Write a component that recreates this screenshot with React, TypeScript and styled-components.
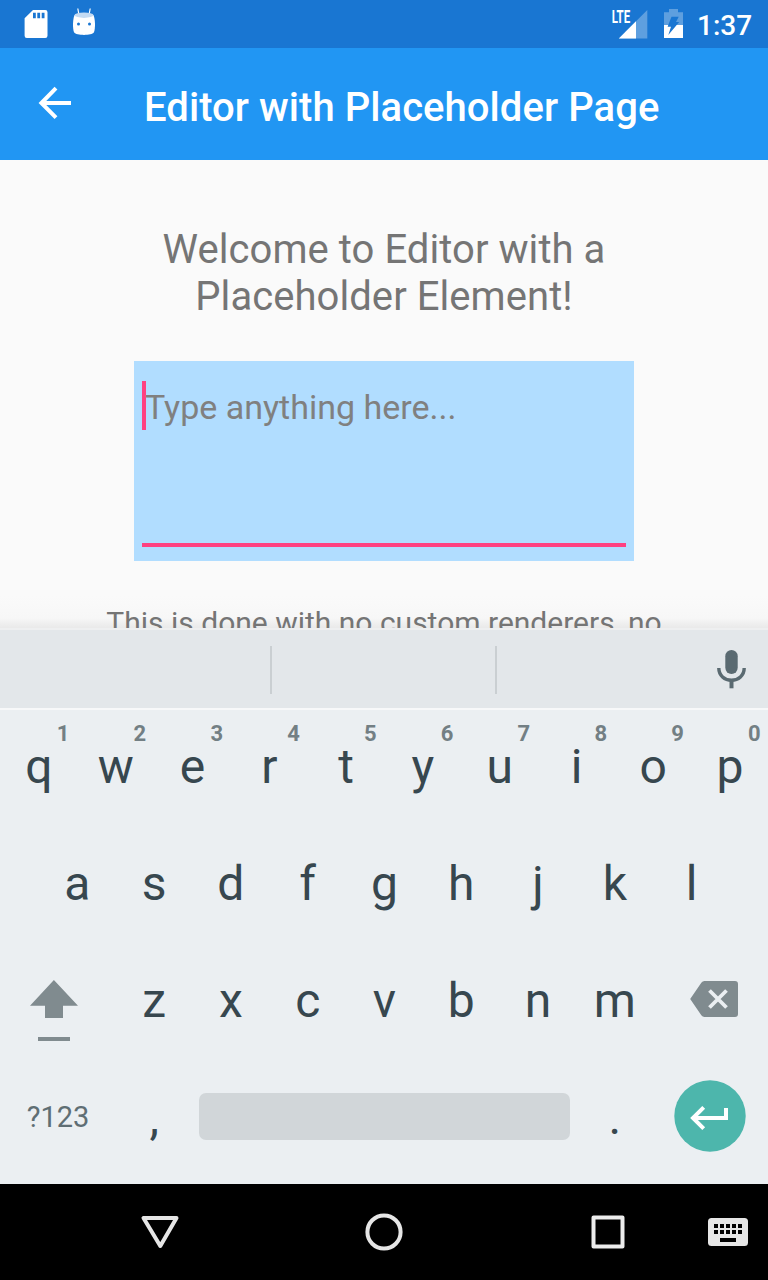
import React from 'react';
import styled, { createGlobalStyle } from 'styled-components';

const GlobalStyle = createGlobalStyle`
  * { box-sizing: border-box; }
  body { margin: 0; font-family: Roboto, sans-serif; }
  svg { display: block; flex: none; }
`;

const Screen = styled.div`
  width: 768px;
  height: 1280px;
  display: flex;
  flex-direction: column;
  overflow: hidden;
  background: #fafafa;
`;

const StatusBar = styled.header`
  flex: none;
  height: 48px;
  display: flex;
  align-items: center;
  padding: 0 16px 0 24px;
  background: #1976d2;
  color: #fff;
`;

const Notifications = styled.div`
  display: flex;
  gap: 24px;
  margin-right: auto;
`;

const Indicators = styled.div`
  display: flex;
  gap: 12px;
  margin-right: 10px;
`;

const Clock = styled.time`
  font-size: 28px;
  line-height: 32px;
  font-weight: 500;
  width: 55px;
  padding-top: 3px;
  white-space: nowrap;
`;

const AppBar = styled.div`
  flex: none;
  height: 112px;
  display: flex;
  align-items: center;
  padding: 0 36px;
  background: #2196f3;
`;

const BackButton = styled.button`
  width: 40px;
  height: 40px;
  padding: 0;
  border: 0;
  background: none;
  margin-top: -2px;
`;

const PageTitle = styled.h1`
  margin: 7px 0 0 68px;
  color: #fff;
  font-size: 40px;
  line-height: 48px;
  font-weight: 500;
  letter-spacing: 0.06px;
  white-space: nowrap;
`;

const Content = styled.main`
  flex: none;
  height: 468px;
  overflow: hidden;
  display: flex;
  flex-direction: column;
  align-items: center;
  padding-top: 66px;
  color: #757575;
  text-align: center;
  background: linear-gradient(to bottom, #fafafa 436px, #f7f7f7 458px, #e9e9e9 468px);
`;

const Welcome = styled.p`
  margin: 0;
  width: 500px;
  font-size: 40px;
  line-height: 47px;
  letter-spacing: 0.06px;
`;

const Editor = styled.div`
  flex: none;
  width: 500px;
  height: 200px;
  margin: 41px 0 42px;
  padding: 20px 8px 14px;
  background: #b1ddff;
`;

const EditorField = styled.div`
  height: 100%;
  display: flex;
  align-items: flex-start;
  border-bottom: 4px solid #ff4081;
`;

const Caret = styled.span`
  width: 4px;
  height: 49px;
  background: #ff4081;
`;

const Placeholder = styled.span`
  margin: 5px 0 0 -1px;
  font-size: 34px;
  line-height: 42px;
  color: #808080;
  white-space: nowrap;
`;

const Note = styled.p`
  margin: 0;
  font-size: 30px;
  line-height: 40px;
  white-space: nowrap;
`;

const Suggestions = styled.div`
  flex: none;
  height: 82px;
  display: grid;
  grid-template-columns: 272px 225px 1fr;
  align-items: center;
  background: #e3e7ea;
  border-top: 2px solid #eeeff0;
  border-bottom: 2px solid #f7f8f9;
`;

const Slot = styled.div<{ $divided?: boolean }>`
  height: 48px;
  border-right: ${(p) => (p.$divided ? '2px solid #cacfd2' : '0')};
  margin-top: ${(p) => (p.$divided ? 2 : 0)}px;
  display: flex;
  align-items: center;
  justify-content: flex-end;
  padding-right: ${(p) => (p.$divided ? 0 : 20)}px;
`;

const Keyboard = styled.section`
  flex: none;
  height: 474px;
  padding-bottom: 6px;
  background: #ebeff2;
  color: #37474f;
`;

const KeyRow = styled.div`
  height: 117px;
  display: flex;
  justify-content: center;
`;

const Key = styled.div<{ $units?: number; $small?: boolean }>`
  position: relative;
  width: ${(p) => (p.$units ?? 1) * 76.8}px;
  display: flex;
  align-items: center;
  justify-content: center;
  padding: 0 0 ${(p) => (p.$small ? 6 : 4)}px 1px;
  font-size: ${(p) => (p.$small ? 29 : 48)}px;
  line-height: 56px;
  color: ${(p) => (p.$small ? '#5f6e74' : '#37474f')};
`;

const ShiftKey = styled(Key)`
  align-items: flex-start;
  padding: 32px 7px 0 0;
`;

const BackspaceKey = styled(Key)`
  padding: 0 0 8px 8px;
`;

const WideKey = styled(Key)`
  padding: 0 0 6px;
`;

const EnterKey = styled(Key)`
  padding: 0 0 8px;
`;

const KeyHint = styled.span`
  position: absolute;
  top: 11px;
  right: 7.4px;
  font-size: 22px;
  line-height: 26px;
  font-weight: 700;
  color: #737f84;
`;

const SpaceBar = styled.div`
  width: 371px;
  height: 47px;
  border-radius: 7px;
  background: #d1d6d9;
`;

const NavBar = styled.nav`
  flex: none;
  height: 96px;
  display: flex;
  align-items: center;
  gap: 176px;
  padding: 0 16px 0 136px;
  background: #000;
`;

const KeyboardSwitch = styled.div`
  margin-left: -104px;
`;

const TOP = 'qwertyuiop'.split('');
const HOME = 'asdfghjkl'.split('');
const BOTTOM = 'zxcvbnm'.split('');

const SdCardIcon = () => (
  <svg width="24" height="32" viewBox="24 8 24 32">
    <path fill="#fff" d="M33 10h12.3a2.2 2.2 0 0 1 2.2 2.2v23.6a2.2 2.2 0 0 1-2.2 2.2H26.8a2.2 2.2 0 0 1-2.2-2.2V18.3z" />
    <path fill="#1976d2" d="M33 12.7h2.8v5.6H33zM37.3 12.7h2.8v5.6h-2.8zM41.7 12.7h2.8v5.6h-2.8z" />
  </svg>
);

const RobotIcon = () => (
  <svg width="24" height="32" viewBox="72 8 24 32">
    <path stroke="#fff" strokeWidth="1.2" d="M77.8 8.5l1 5.5M90.2 8.5l-1 5.5" />
    <path fill="#fff" d="M75 14.5C72.7 17 72.3 29 74.2 32.6C76 35.8 92 35.8 93.8 32.6C95.7 29 95.3 17 93 14.5z" />
    <ellipse cx="84" cy="15.2" rx="9.3" ry="2.7" fill="#c4dbf3" />
    <circle cx="78.5" cy="24" r="1.5" fill="#1976d2" />
    <circle cx="89.5" cy="24" r="1.5" fill="#1976d2" />
  </svg>
);

const SignalIcon = () => (
  <svg width="38" height="32" viewBox="611 8 38 32">
    <path fill="#fff" fillOpacity=".3" d="M647.3 10v28.5h-28.5z" />
    <path fill="#fff" d="M636 21.3v17.2h-17.2z" />
    <text x="611.7" y="22.7" fontSize="17.5" fontWeight="700" fill="#fff" textLength="18.5" lengthAdjust="spacingAndGlyphs">LTE</text>
  </svg>
);

const BatteryIcon = () => (
  <svg width="26" height="32" viewBox="661 8 26 32">
    <path fill="#fff" fillOpacity=".3" d="M669 9h9v3.3h5V25h-19V12.3h5z" />
    <path fill="#fff" d="M664 25h19v13h-19z" />
    <path fill="#1976d2" d="M671.5 16.7h7.2l-2.7 5.3h3.2l-10.9 13 2.7-8.3h-3.4z" />
  </svg>
);

const BackIcon = () => (
  <svg width="40" height="40" viewBox="36 83 40 40" fill="none" stroke="#fff" strokeWidth="4">
    <path d="M71 103H42M56 88.2L41.4 103 56 117.6" />
  </svg>
);

const MicIcon = () => (
  <svg width="34" height="42" viewBox="714 648 34 42" fill="none" stroke="#5a6a71">
    <path strokeWidth="12.4" strokeLinecap="round" d="M731.5 656.2v11.6" />
    <path strokeWidth="3.4" d="M718.8 668c0 7.4 5.8 12.3 12.7 12.3S744.2 675.4 744.2 668" />
    <path strokeWidth="4" d="M731.5 680v8.3" />
  </svg>
);

const ShiftIcon = () => (
  <svg width="52" height="70" viewBox="28 976 52 70" fill="#808b8f">
    <path d="M53.9 980L78 1005.7H63V1018H45v-12.3H30zM38 1037h32v4H38z" />
  </svg>
);

const BackspaceIcon = () => (
  <svg width="52" height="40" viewBox="688 979 52 40">
    <path fill="#808b8f" d="M704.5 981H735a3 3 0 0 1 3 3v30a3 3 0 0 1-3 3h-30.5q-2 0-3.2-1.8L690.2 999l11.1-16.2q1.2-1.8 3.2-1.8z" />
    <path stroke="#ebeff2" strokeWidth="3.8" d="M709.5 990.5l17 17M726.5 990.5l-17 17" />
  </svg>
);

const EnterIcon = () => (
  <svg width="72" height="72" viewBox="674 1080 72 72" fill="none">
    <circle cx="710" cy="1116" r="35.7" fill="#4db6ac" />
    <path stroke="#fff" strokeWidth="4" d="M726 1108v10h-32M703.7 1107.3L693 1118l10.7 10.7" />
  </svg>
);

const App = () => (
  <Screen>
    <GlobalStyle />
    <StatusBar>
      <Notifications>
        <SdCardIcon />
        <RobotIcon />
      </Notifications>
      <Indicators>
        <SignalIcon />
        <BatteryIcon />
      </Indicators>
      <Clock>1:37</Clock>
    </StatusBar>
    <AppBar>
      <BackButton aria-label="Back">
        <BackIcon />
      </BackButton>
      <PageTitle>Editor with Placeholder Page</PageTitle>
    </AppBar>
    <Content>
      <Welcome>Welcome to Editor with a Placeholder Element!</Welcome>
      <Editor>
        <EditorField>
          <Caret />
          <Placeholder>Type anything here...</Placeholder>
        </EditorField>
      </Editor>
      <Note>This is done with no custom renderers, no</Note>
    </Content>
    <Suggestions>
      <Slot $divided />
      <Slot $divided />
      <Slot>
        <MicIcon />
      </Slot>
    </Suggestions>
    <Keyboard>
      <KeyRow>
        {TOP.map((k, i) => (
          <Key key={k}>
            {k}
            <KeyHint>{(i + 1) % 10}</KeyHint>
          </Key>
        ))}
      </KeyRow>
      <KeyRow>
        {HOME.map((k) => (
          <Key key={k}>{k}</Key>
        ))}
      </KeyRow>
      <KeyRow>
        <ShiftKey $units={1.5}>
          <ShiftIcon />
        </ShiftKey>
        {BOTTOM.map((k) => (
          <Key key={k}>{k}</Key>
        ))}
        <BackspaceKey $units={1.5}>
          <BackspaceIcon />
        </BackspaceKey>
      </KeyRow>
      <KeyRow>
        <Key $units={1.5} $small>?123</Key>
        <Key>,</Key>
        <WideKey $units={5}>
          <SpaceBar />
        </WideKey>
        <Key>.</Key>
        <EnterKey $units={1.5}>
          <EnterIcon />
        </EnterKey>
      </KeyRow>
    </Keyboard>
    <NavBar>
      <svg width="48" height="48" viewBox="136 1208 48 48" fill="none" stroke="#e6e6e6" strokeWidth="4" strokeLinejoin="round">
        <path d="M143.5 1218h33L160.3 1246z" />
      </svg>
      <svg width="48" height="48" viewBox="360 1208 48 48" fill="none" stroke="#e6e6e6" strokeWidth="4">
        <circle cx="384" cy="1232" r="16.6" />
      </svg>
      <svg width="48" height="48" viewBox="584 1208 48 48" fill="none" stroke="#ececec" strokeWidth="4" strokeLinejoin="round">
        <path d="M593.5 1217.5h29v29h-29z" />
      </svg>
      <KeyboardSwitch>
        <svg width="48" height="48" viewBox="704 1208 48 48">
          <rect x="708" y="1218" width="40" height="28" rx="3.5" fill="#e6e6e6" />
          {[714, 720, 726, 732, 738].map((x) => (
            <path key={x} d={`M${x} 1224h4v4h-4zM${x} 1230h4v4h-4z`} />
          ))}
          <path d="M720 1238h16v4h-16z" />
        </svg>
      </KeyboardSwitch>
    </NavBar>
  </Screen>
);

export default App;
